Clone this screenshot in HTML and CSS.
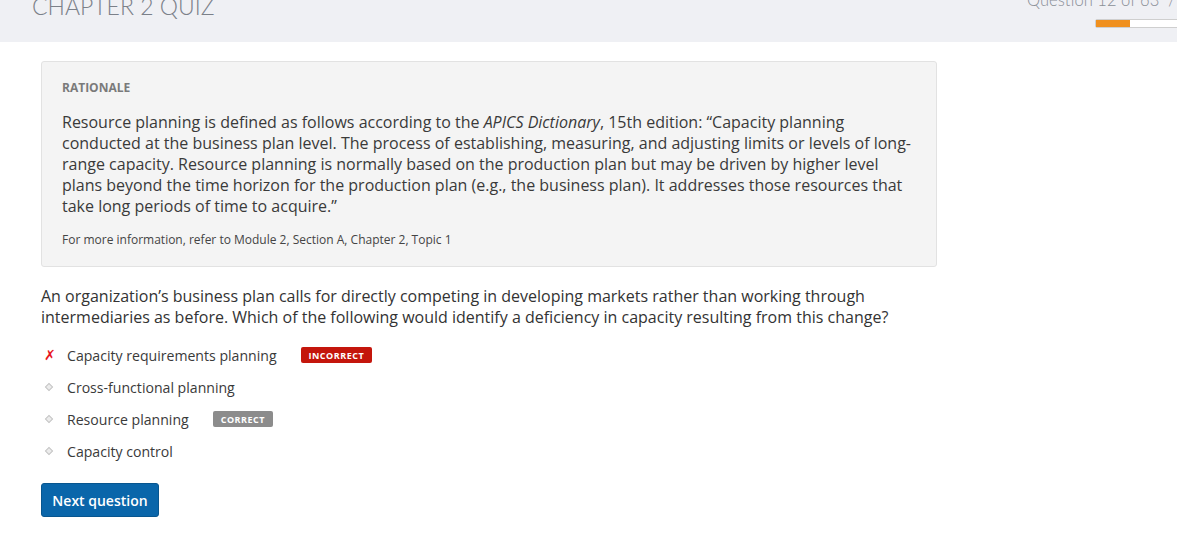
FILE: index.html
```html
<!DOCTYPE html>
<html lang="en">
<head>
<meta charset="utf-8">
<title>Chapter 2 Quiz</title>
<link rel="stylesheet" href="styles.css">
</head>
<body>
<header class="quiz-header">
  <h1 class="quiz-title">CHAPTER 2 QUIZ</h1>
  <div class="progress-area">
    <div class="progress-text">Question 12 of 63 &nbsp;/ 63</div>
    <div class="progress-bar"><div class="progress-fill" style="width: 20%"></div></div>
  </div>
</header>
<main class="quiz-main">
  <section class="rationale">
    <h2 class="rationale-heading">RATIONALE</h2>
    <p class="rationale-text">Resource planning is defined as follows according to the <em>APICS Dictionary</em>, 15th edition: “Capacity planning conducted at the business plan level. The process of establishing, measuring, and adjusting limits or levels of long-range capacity. Resource planning is normally based on the production plan but may be driven by higher level plans beyond the time horizon for the production plan (e.g., the business plan). It addresses those resources that take long periods of time to acquire.”</p>
    <p class="rationale-ref">For more information, refer to Module 2, Section A, Chapter 2, Topic 1</p>
  </section>
  <p class="question">An organization’s business plan calls for directly competing in developing markets rather than working through intermediaries as before. Which of the following would identify a deficiency in capacity resulting from this change?</p>
  <ul class="options">
    <li class="option"><span class="marker marker-wrong">✗</span><span class="option-text">Capacity requirements planning</span><span class="badge badge-incorrect">INCORRECT</span></li>
    <li class="option"><span class="marker"><span class="dot"></span></span><span class="option-text">Cross-functional planning</span></li>
    <li class="option"><span class="marker"><span class="dot"></span></span><span class="option-text">Resource planning</span><span class="badge badge-correct">CORRECT</span></li>
    <li class="option"><span class="marker"><span class="dot"></span></span><span class="option-text">Capacity control</span></li>
  </ul>
  <button class="next-btn" type="button">Next question</button>
</main>
</body>
</html>
```

FILE: styles.css
```css
html, body {
  margin: 0;
  padding: 0;
  background: #ffffff;
  overflow: hidden;
}

body {
  font-family: "Open Sans", "Liberation Sans", sans-serif;
  color: #333333;
}

.quiz-header {
  height: 42px;
  background: #eff0f4;
  display: flex;
  align-items: flex-start;
  padding-left: 32px;
}

.quiz-title {
  margin: -5px 0 0 0;
  font-family: Lato, "Open Sans", sans-serif;
  font-weight: 300;
  font-size: 23px;
  line-height: 23px;
  color: #7b8089;
}

.progress-area {
  margin-left: auto;
  margin-right: -110px;
  display: flex;
  flex-direction: column;
  width: 260px;
}

.progress-text {
  margin-top: -8px;
  font-family: Lato, "Open Sans", sans-serif;
  font-weight: 300;
  font-size: 16.6px;
  line-height: 17px;
  color: #8a8f97;
  white-space: nowrap;
}

.progress-bar {
  margin-top: 10px;
  margin-left: 68px;
  width: 170px;
  height: 7px;
  background: #ffffff;
  border: 1px solid #cfcfcf;
  border-radius: 2px;
}

.progress-fill {
  height: 100%;
  background: #f0901e;
}

.quiz-main {
  padding: 19px 0 0 41px;
}

.rationale {
  width: 854px;
  background: #f4f4f4;
  border: 1px solid #e2e2e2;
  border-radius: 3px;
  padding: 18px 20px 18px 20px;
}

.rationale-heading {
  margin: 0 0 16px 0;
  font-size: 12px;
  line-height: 16px;
  font-weight: 700;
  color: #7a7a7a;
}

.rationale-text {
  margin: 0;
  font-size: 16px;
  line-height: 21px;
  color: #3a3a3a;
}

.rationale-ref {
  margin: 15px 0 0 0;
  font-size: 12px;
  line-height: 16px;
  color: #444444;
}

.question {
  margin: 19px 0 0 0;
  width: 880px;
  font-size: 16px;
  line-height: 21px;
  color: #333333;
}

.options {
  list-style: none;
  margin: 11px 0 0 0;
  padding: 0;
}

.option {
  display: flex;
  align-items: center;
  height: 32px;
  font-size: 14.1px;
  color: #3a3a3a;
}

.marker {
  width: 26px;
  display: flex;
  align-items: center;
  justify-content: flex-start;
  padding-left: 3px;
  box-sizing: border-box;
}

.marker-wrong {
  color: #e8141c;
  font-family: "DejaVu Sans", sans-serif;
  font-style: italic;
  font-weight: 700;
  font-size: 14px;
}

.dot {
  display: block;
  width: 4px;
  height: 4px;
  margin-left: 2px;
  background: #ececec;
  border: 1px solid #c6c6c6;
  transform: rotate(45deg);
}

.badge {
  margin-left: 24px;
  height: 16px;
  padding: 0 8px;
  border-radius: 2px;
  display: inline-flex;
  align-items: center;
  font-size: 9px;
  font-weight: 700;
  letter-spacing: 0.5px;
  color: #ffffff;
}

.badge-incorrect {
  background: #c4160c;
}

.badge-correct {
  background: #8c8c8c;
}

.next-btn {
  margin-top: 16px;
  width: 118px;
  height: 34px;
  background: #0a66aa;
  border: 1px solid #08568f;
  border-radius: 3px;
  color: #ffffff;
  font-family: "Open Sans", sans-serif;
  font-size: 14px;
  font-weight: 600;
  padding: 0;
}
```
